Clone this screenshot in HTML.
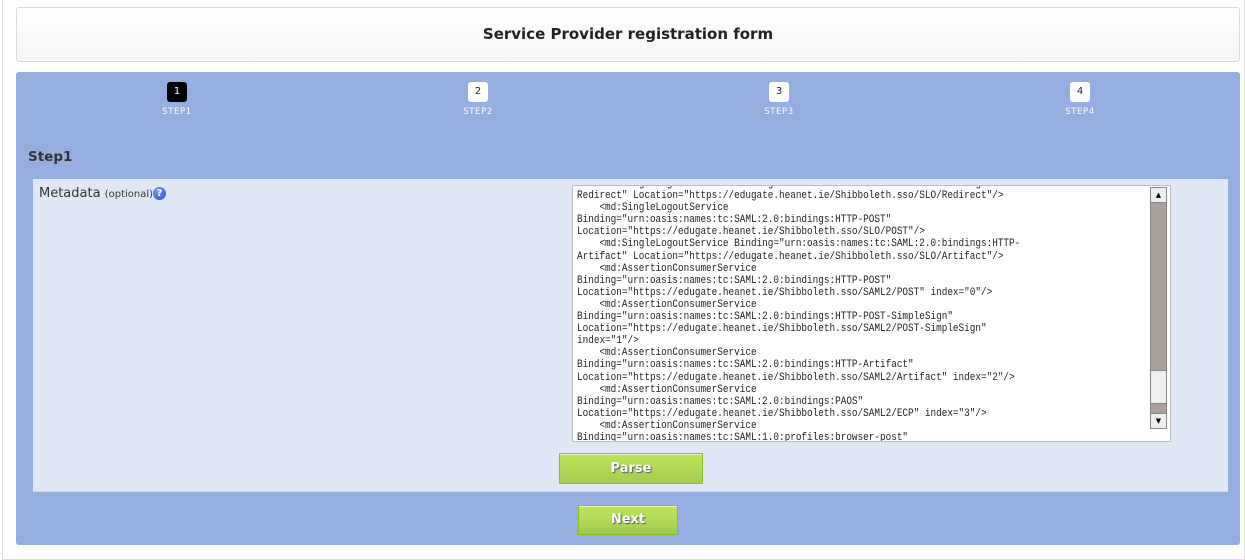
<!DOCTYPE html>
<html><head><style>
body{margin:0;width:1245px;height:548px;background:#fff;font-family:"DejaVu Sans","Liberation Sans",sans-serif;position:relative;overflow:hidden}
.outer{position:absolute;left:2px;top:-2px;width:1241px;height:560px;border:1px solid #ddd;}
.hdr{position:absolute;left:16px;top:7px;width:1222px;height:53px;border:1px solid #d8d8d8;border-radius:3px;background:linear-gradient(#fff,#f5f5f5);text-align:center;line-height:53px;font-size:15px;color:#222;font-weight:bold}
.blue{position:absolute;left:16px;top:72px;width:1224px;height:473px;background:#93aedf;border-radius:3px}
.st{position:absolute;top:10px;width:60px;margin-left:-30px;text-align:center}
.st b{display:block;margin:0 auto;width:20px;height:20px;border-radius:3px;background:#fff;color:#222;font-size:10px;line-height:20px;font-weight:normal}
.st.a b{background:#000;color:#fff}
.st span{display:block;margin-top:5px;font-size:8.5px;color:#fff;letter-spacing:.6px}
.s1{position:absolute;left:12px;top:77px;font-size:13.5px;font-weight:bold;color:#333}
.inner{position:absolute;left:17px;top:107px;width:1195px;height:312px;background:#e1e8f5;border-bottom:1px solid #d4e6b0}
.lab{position:absolute;left:6px;top:7px;font-size:13px;color:#333}
.lab small{font-size:10px}
.q{display:inline-block;width:13px;height:13px;border-radius:50%;background:radial-gradient(circle at 40% 35%,#7aa0ff,#2244bb);color:#fff;font-size:10px;font-weight:bold;text-align:center;line-height:13px;vertical-align:1px}
.ta{position:absolute;left:539px;top:6px;width:597px;height:255px;background:#fff;border:1px solid #bbb;border-radius:2px;overflow:hidden}
.ta pre{margin:0;position:absolute;left:4px;top:-8px;font-family:"Liberation Mono","DejaVu Sans Mono",monospace;font-size:11px;line-height:12.1px;color:#222;transform:scaleX(0.85);transform-origin:0 0}
.sb{position:absolute;right:3px;top:1px;width:15px;height:240px;background:#a9a09b;border:1px solid #888}
.sb .up,.sb .dn{position:absolute;left:0;width:15px;height:14px;background:#eee;border-bottom:1px solid #888;font-size:7px;text-align:center;line-height:14px}
.sb .dn{bottom:0;border-top:1px solid #888;border-bottom:0}
.sb .th{position:absolute;left:0;top:182px;width:15px;height:32px;background:#eee;border-top:1px solid #888;border-bottom:1px solid #888}
.btn{position:absolute;border:1px solid #84c21e;background:linear-gradient(#bde65a,#a3cb52);color:#fff;font-weight:bold;font-size:13px;text-align:center;text-shadow:1px 1px 1px #555;box-shadow:inset 0 1px 0 #e5f8b0}
</style></head><body>
<div class="outer"></div>
<div class="hdr">Service Provider registration form</div>
<div class="blue">
 <div class="st a" style="left:161px"><b>1</b><span>STEP1</span></div>
 <div class="st" style="left:462px"><b>2</b><span>STEP2</span></div>
 <div class="st" style="left:763px"><b>3</b><span>STEP3</span></div>
 <div class="st" style="left:1064px"><b>4</b><span>STEP4</span></div>
 <div class="s1">Step1</div>
 <div class="inner">
  <div class="lab">Metadata <small>(optional)</small><span class="q">?</span></div>
  <div class="ta"><pre>    &lt;md:SingleLogoutService Binding="urn:oasis:names:tc:SAML:2.0:bindings:HTTP-
Redirect" Location="https://edugate.heanet.ie/Shibboleth.sso/SLO/Redirect"/&gt;
    &lt;md:SingleLogoutService
Binding="urn:oasis:names:tc:SAML:2.0:bindings:HTTP-POST"
Location="https://edugate.heanet.ie/Shibboleth.sso/SLO/POST"/&gt;
    &lt;md:SingleLogoutService Binding="urn:oasis:names:tc:SAML:2.0:bindings:HTTP-
Artifact" Location="https://edugate.heanet.ie/Shibboleth.sso/SLO/Artifact"/&gt;
    &lt;md:AssertionConsumerService
Binding="urn:oasis:names:tc:SAML:2.0:bindings:HTTP-POST"
Location="https://edugate.heanet.ie/Shibboleth.sso/SAML2/POST" index="0"/&gt;
    &lt;md:AssertionConsumerService
Binding="urn:oasis:names:tc:SAML:2.0:bindings:HTTP-POST-SimpleSign"
Location="https://edugate.heanet.ie/Shibboleth.sso/SAML2/POST-SimpleSign"
index="1"/&gt;
    &lt;md:AssertionConsumerService
Binding="urn:oasis:names:tc:SAML:2.0:bindings:HTTP-Artifact"
Location="https://edugate.heanet.ie/Shibboleth.sso/SAML2/Artifact" index="2"/&gt;
    &lt;md:AssertionConsumerService
Binding="urn:oasis:names:tc:SAML:2.0:bindings:PAOS"
Location="https://edugate.heanet.ie/Shibboleth.sso/SAML2/ECP" index="3"/&gt;
    &lt;md:AssertionConsumerService
Binding="urn:oasis:names:tc:SAML:1.0:profiles:browser-post"
Location="https://edugate.heanet.ie/Shibboleth.sso/SAML/POST" index="4"/&gt;</pre>
   <div class="sb"><div class="up">▲</div><div class="th"></div><div class="dn">▼</div></div>
  </div>
  <div class="btn" style="left:526px;top:274px;width:142px;height:29px;line-height:29px">Parse</div>
 </div>
 <div class="btn" style="left:562px;top:433px;width:98px;height:28px;line-height:28px">Next</div>
</div>
</body></html>
